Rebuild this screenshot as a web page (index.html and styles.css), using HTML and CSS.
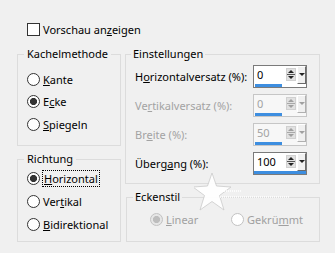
FILE: index.html
```html
<!DOCTYPE html>
<html lang="de">
<head>
<meta charset="utf-8">
<title>Kacheln</title>
<link rel="stylesheet" href="styles.css">
</head>
<body>
<div class="dialog">
  <div class="check-row">
    <span class="checkbox"></span>
    <span class="label">Vorschau an<u>z</u>eigen</span>
  </div>
  <div class="columns">
    <div class="col col-left">
      <fieldset class="group g-kachel">
        <legend>Kachelmethode</legend>
        <div class="radio-list">
          <div class="radio-row"><span class="radio"></span><span><u>K</u>ante</span></div>
          <div class="radio-row"><span class="radio checked"></span><span>E<u>c</u>ke</span></div>
          <div class="radio-row"><span class="radio"></span><span><u>S</u>piegeln</span></div>
        </div>
      </fieldset>
      <fieldset class="group g-richtung">
        <legend>Richtung</legend>
        <div class="radio-list">
          <div class="radio-row"><span class="radio checked"></span><span class="focus"><u>H</u>orizontal</span></div>
          <div class="radio-row"><span class="radio"></span><span>Ver<u>t</u>ikal</span></div>
          <div class="radio-row"><span class="radio"></span><span><u>B</u>idirektional</span></div>
        </div>
      </fieldset>
    </div>
    <div class="col col-right">
      <fieldset class="group g-einst">
        <legend>Einstellungen</legend>
        <div class="field-list">
          <div class="field-row">
            <span class="field-label">H<u>o</u>rizontalversatz (%):</span>
            <div class="spin">
              <div class="spin-top">
                <span class="spin-val">0</span>
                <span class="ud"><span class="ud-up"></span><span class="ud-down"></span></span>
                <span class="dd"></span>
              </div>
              <div class="spin-bar"></div>
            </div>
          </div>
          <div class="field-row disabled">
            <span class="field-label">Ve<u>r</u>tikalversatz (%):</span>
            <div class="spin">
              <div class="spin-top">
                <span class="spin-val">0</span>
                <span class="ud"><span class="ud-up"></span><span class="ud-down"></span></span>
                <span class="dd"></span>
              </div>
              <div class="spin-bar"></div>
            </div>
          </div>
          <div class="field-row disabled">
            <span class="field-label">Br<u>e</u>ite (%):</span>
            <div class="spin">
              <div class="spin-top">
                <span class="spin-val">50</span>
                <span class="ud"><span class="ud-up"></span><span class="ud-down"></span></span>
                <span class="dd"></span>
              </div>
              <div class="spin-bar"></div>
            </div>
          </div>
          <div class="field-row">
            <span class="field-label">Überg<u>a</u>ng (%):</span>
            <div class="spin">
              <div class="spin-top">
                <span class="spin-val">100</span>
                <span class="ud"><span class="ud-up"></span><span class="ud-down"></span></span>
                <span class="dd"></span>
              </div>
              <div class="spin-bar full"></div>
            </div>
          </div>
        </div>
      </fieldset>
      <fieldset class="group g-ecken">
        <legend>Eckenstil</legend>
        <div class="radio-inline">
          <div class="radio-row dis"><span class="radio checked"></span><span><u>L</u>inear</span></div>
          <div class="radio-row dis"><span class="radio"></span><span>Gekrü<u>m</u>mt</span></div>
        </div>
      </fieldset>
    </div>
  </div>
  <svg class="watermark" width="110" height="40" viewBox="0 0 110 40">
    <polygon points="18,0 22.5,13 37,14 25.5,22.5 30,37 18,28.5 6,37 10.5,22.5 -1,14 13.5,13" fill="#ffffff" stroke="#c9c9c9" stroke-width="0.8" opacity="0.95"/>
    <line x1="26" y1="24" x2="96" y2="24" stroke="#ffffff" stroke-width="1.6" stroke-dasharray="1 1"/>
    <line x1="26" y1="18" x2="48" y2="18" stroke="#ffffff" stroke-width="1.4" stroke-dasharray="1 1"/>
  </svg>
</div>
</body>
</html>
```

FILE: styles.css
```css
html, body {
  margin: 0;
  padding: 0;
  background: #f0f0f0;
}

body {
  width: 335px;
  height: 253px;
  overflow: hidden;
  font-family: "Noto Sans", "Open Sans", sans-serif;
  font-size: 11px;
  color: #000;
}

u {
  text-decoration: underline;
  text-underline-offset: 1px;
}

.dialog {
  position: relative;
  padding: 23px 0 0 17px;
  height: 253px;
  box-sizing: border-box;
}

.check-row {
  display: flex;
  align-items: center;
  gap: 3px;
  margin-left: 10px;
  height: 13px;
}

.checkbox {
  width: 13px;
  height: 13px;
  box-sizing: border-box;
  border: 1px solid #333;
  background: #fff;
}

.label {
  line-height: 16px;
}

.columns {
  display: flex;
  gap: 4px;
  margin-top: 10px;
}

.col {
  display: flex;
  flex-direction: column;
  gap: 5px;
}

.col-left {
  width: 104px;
}

.col-right {
  width: 195px;
}

.group {
  margin: 0;
  padding: 0;
  min-width: 0;
  border: 1px solid #dcdcdc;
  box-sizing: border-box;
}

.group legend {
  line-height: 16px;
  padding: 0 3px;
  margin-left: 6px;
}

.g-kachel { height: 100px; }
.g-richtung { height: 91px; }
.g-einst { height: 138px; }
.g-ecken { height: 53px; margin-left: 1px; }

.g-einst legend { margin-left: 5px; padding: 0 2px; }
.g-ecken legend { margin-left: 6px; padding: 0 2px; }

.radio-list {
  padding: 6px 0 0 9px;
}

.g-richtung .radio-list {
  padding-top: 0;
}

.radio-row {
  display: flex;
  align-items: center;
  gap: 3px;
  height: 22.5px;
}

.g-richtung .radio-row {
  height: 23px;
}

.radio {
  flex: none;
  width: 13px;
  height: 13px;
  box-sizing: border-box;
  border: 1px solid #333;
  border-radius: 50%;
  background: #fff;
}

.radio.checked {
  background: radial-gradient(circle, #333 0, #333 3.2px, #fff 3.9px);
}

.focus {
  outline: 1px dotted #000;
  outline-offset: 0;
  padding: 0 1px;
  line-height: 15px;
}

.field-list {
  padding: 0 0 0 9px;
}

.field-row {
  display: flex;
  align-items: center;
  height: 29px;
}

.field-label {
  width: 118px;
  flex: none;
}

.spin {
  width: 54px;
  height: 23px;
  box-sizing: border-box;
  border: 1px solid #7a7a7a;
  background: #fff;
  display: flex;
  flex-direction: column;
}

.spin-top {
  display: flex;
  height: 18px;
}

.spin-val {
  width: 32px;
  padding-left: 3px;
  box-sizing: border-box;
  line-height: 17px;
}

.ud {
  width: 10px;
  height: 13px;
  margin-top: 2px;
  box-sizing: border-box;
  display: flex;
  flex-direction: column;
  background: #e1e1e1;
  border: 1px solid #d0d0d0;
}

.ud-up, .ud-down {
  flex: 1;
  position: relative;
}

.ud-up {
  border-bottom: 1px solid #555;
}

.ud-up::after, .ud-down::after, .dd::after {
  content: "";
  display: block;
  width: 0;
  height: 0;
  margin: 1px auto 0;
  border-left: 3px solid transparent;
  border-right: 3px solid transparent;
}

.ud-up::after {
  border-bottom: 3px solid #222;
}

.ud-down::after {
  border-top: 3px solid #222;
}

.dd {
  width: 9px;
  height: 18px;
  margin-left: 1px;
  box-sizing: border-box;
  background: #f0f0f0;
  border-top: 1px solid #fff;
  border-left: 1px solid #fff;
  border-right: 1px solid #6a6a6a;
  border-bottom: 1px solid #6a6a6a;
  padding-top: 6px;
}

.dd::after {
  margin-top: 0;
  border-top: 3px solid #222;
}

.spin-bar {
  width: 27px;
  height: 3px;
  margin-left: 1px;
  background: #3d8ee0;
}

.spin-bar.full {
  width: auto;
  margin-left: 0;
}

.disabled .field-label,
.disabled .spin-val {
  color: #a3a3a3;
}

.disabled .spin {
  border-color: #c6c6c6;
  background: #f7f7f7;
}

.disabled .ud-up::after { border-bottom-color: #a0a0a0; }
.disabled .ud-down::after,
.disabled .dd::after { border-top-color: #a0a0a0; }
.disabled .ud-up { border-bottom-color: #a8a8a8; }
.disabled .dd {
  border-right-color: #b0b0b0;
  border-bottom-color: #b0b0b0;
}

.radio-inline {
  display: flex;
  padding: 3px 0 0 23px;
}

.radio-inline .radio-row {
  height: 22px;
  width: 81px;
}

.radio-row.dis {
  color: #a0a0a0;
}

.radio-row.dis .radio {
  border-color: #c2c2c2;
  background: #fff;
}

.radio-row.dis .radio.checked {
  background: radial-gradient(circle, #bdbdbd 0, #bdbdbd 3.2px, #e6e6e6 3.9px);
}

.watermark {
  position: absolute;
  left: 194px;
  top: 173px;
}
```
